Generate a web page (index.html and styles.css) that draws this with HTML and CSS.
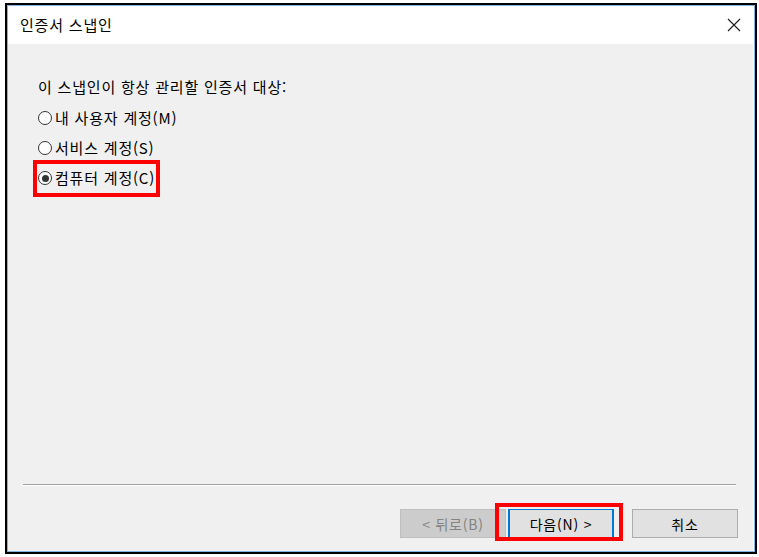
FILE: index.html
```html
<!DOCTYPE html>
<html lang="ko">
<head>
<meta charset="utf-8">
<title>인증서 스냅인</title>
<link rel="stylesheet" href="styles.css">
</head>
<body>
<div class="frame">
  <div class="dialog">
    <div class="titlebar">
      <span class="title">인증서 스냅인</span>
      <svg class="close" width="14" height="14" viewBox="0 0 14 14"><path d="M1 1 L13 13 M13 1 L1 13" stroke="#1a1a1a" stroke-width="1.1" fill="none"/></svg>
    </div>
    <div class="content">
      <p class="prompt">이 스냅인이 항상 관리할 인증서 대상:</p>
      <div class="options">
        <div class="opt"><span class="radio"></span><span>내 사용자 계정(M)</span></div>
        <div class="opt"><span class="radio"></span><span>서비스 계정(S)</span></div>
        <div class="opt"><span class="radio checked"></span><span>컴퓨터 계정(C)</span></div>
      </div>
      <div class="footer">
        <div class="sep"></div>
        <div class="buttons">
          <div class="btn disabled">&lt; 뒤로(B)</div>
          <div class="btn default">다음(N) &gt;</div>
          <div class="btn cancel">취소</div>
        </div>
      </div>
    </div>
  </div>
  <div class="mark mark-radio"></div>
  <div class="mark mark-next"></div>
</div>
</body>
</html>
```

FILE: styles.css
```css
html, body {
  margin: 0;
  padding: 0;
  background: #ffffff;
}
body {
  font-family: "Noto Sans CJK KR", "Noto Sans", sans-serif;
  font-size: 15px;
  letter-spacing: 0.8px;
  color: #000;
}
.frame {
  position: relative;
  margin: 3px 0 0 5px;
  width: 748px;
  height: 547px;
  border: 2px solid #000;
  display: flex;
}
.dialog {
  flex: 1;
  display: flex;
  flex-direction: column;
  border: 1px solid #7fb3e6;
  background: #fff;
}
.titlebar {
  height: 38px;
  display: flex;
  align-items: center;
  justify-content: space-between;
  padding: 0 13px 0 12px;
  background: #fff;
}
.title {
  font-size: 15px;
  line-height: 20px;
  margin-top: -1px;
}
.close {
  display: block;
  margin-top: -1px;
}
.content {
  flex: 1;
  display: flex;
  flex-direction: column;
  background: #f0f0f0;
  margin-right: 1px;
}
.prompt {
  margin: 33px 0 0 30px;
  line-height: 20px;
  font-size: 15px;
}
.options {
  margin: 6px 0 0 30px;
  display: flex;
  flex-direction: column;
}
.opt {
  height: 30px;
  display: flex;
  align-items: center;
  gap: 3px;
  line-height: 20px;
}
.radio {
  width: 12px;
  height: 12px;
  border: 1.5px solid #333;
  border-radius: 50%;
  background: #fff;
  display: flex;
  align-items: center;
  justify-content: center;
  flex: none;
}
.radio.checked::after {
  content: "";
  width: 7px;
  height: 7px;
  border-radius: 50%;
  background: #333;
}
.footer {
  margin-top: auto;
  display: flex;
  flex-direction: column;
}
.sep {
  margin: 0 17px 0 15px;
  border-top: 1px solid #a0a0a0;
  border-bottom: 1px solid #ffffff;
}
.buttons {
  display: flex;
  justify-content: flex-end;
  margin: 23px 15px 13px 0;
}
.btn {
  box-sizing: border-box;
  width: 106px;
  height: 29px;
  display: flex;
  align-items: center;
  justify-content: center;
  font-size: 14px;
  background: #e1e1e1;
  border: 1px solid #adadad;
}
.btn.disabled {
  background: #cccccc;
  border-color: #bfbfbf;
  color: #838383;
  margin-right: 2px;
}
.btn.default {
  border: 1px solid #0078d7;
  border-left-width: 2px;
  border-right-width: 2px;
  margin-right: 18px;
}
.mark {
  position: absolute;
  border: 4px solid #ff0000;
  box-sizing: border-box;
}
.mark-radio {
  left: 26px;
  top: 155px;
  width: 127px;
  height: 37px;
}
.mark-next {
  left: 488px;
  top: 498px;
  width: 128px;
  height: 38px;
}
```
